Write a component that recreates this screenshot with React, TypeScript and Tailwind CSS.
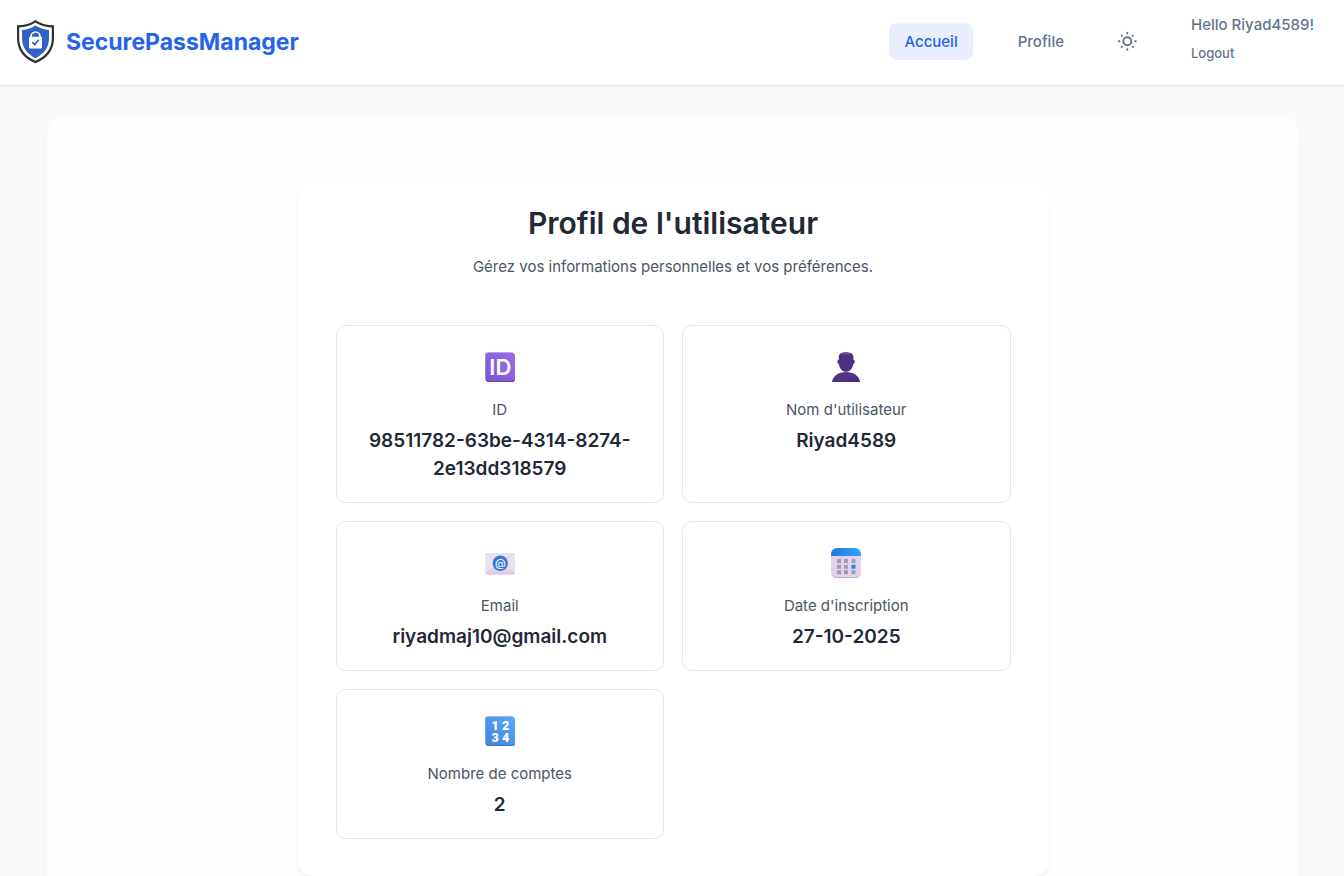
import type { ReactNode } from "react";

function ShieldLogo() {
  return (
    <svg viewBox="0 0 38 44" className="h-11 w-[38px]" aria-hidden="true">
      <path d="M19.500 0C15 3.500 8.500 5.300 1 5.300V18c0 12 6.300 20.500 18.500 25.300C31.700 38.500 38 30 38 18V5.300C30.500 5.300 24 3.500 19.500 0Z" fill="#2f3136" />
      <path d="M19.500 2.500C15 5.500 9.500 7.100 3.200 7.400V18c0 10.500 5.300 18 16.300 22.800C30.500 36 35.800 28.500 35.800 18V7.400C29.500 7.100 24 5.500 19.500 2.500Z" fill="#fff" />
      <path d="M19.500 5.500C15.500 8.300 11.500 9.500 6 10v8c0 9 4.500 15.600 13.500 20.200C28.500 33.600 33 27 33 18v-8C27.500 9.500 23.500 8.300 19.500 5.500Z" fill="#2f62c4" />
      <path d="M15 18v-1.500a4.500 4.500 0 0 1 9 0V18" fill="none" stroke="#fff" strokeWidth="1.700" />
      <rect x="13" y="16.800" width="13" height="11.700" rx=".8" fill="#fff" />
      <path d="m16.300 22.200 2.400 2.500 4-5" fill="none" stroke="#2f62c4" strokeWidth="1.700" />
    </svg>
  );
}

function SunIcon() {
  return (
    <svg viewBox="0 0 20 20" className="size-5" fill="none" stroke="currentColor" strokeWidth="1.900" strokeLinecap="round" aria-hidden="true">
      <circle cx="10.300" cy="10.300" r="4" />
      <path d="M10.300 1.800v.7M10.300 18.100v.7M1.800 10.300h.7M18.100 10.300h.7M4.600 4.600l.3.3M15.700 15.700l.3.3M4.600 16l.3-.3M15.700 4.900l.3-.3" />
    </svg>
  );
}

function IdIcon() {
  return (
    <svg viewBox="0 0 30 30" className="size-[30px]" aria-hidden="true">
      <defs>
        <linearGradient id="id-fill" x1="0" y1="1" x2="1" y2="0">
          <stop offset="0" stopColor="#7a55cf" />
          <stop offset="1" stopColor="#9c6cf0" />
        </linearGradient>
      </defs>
      <rect width="29" height="29" rx="3" fill="#b3a6cf" />
      <rect x=".6" y="1" width="29.400" height="29" rx="3" fill="url(#id-fill)" />
      <path d="M1 27q.5 3 3 3h23q3 0 3-3-1 2-3 2H4q-2 0-3-2Z" fill="#6a3fb0" />
      <text x="15.300" y="23.300" textAnchor="middle" fontFamily="Inter, sans-serif" fontWeight="600" fontSize="22" fill="#fff">ID</text>
    </svg>
  );
}

function UserIcon() {
  return (
    <svg viewBox="0 0 30 30" className="size-[30px]" aria-hidden="true">
      <defs>
        <linearGradient id="user-fill" x1="0" y1="0" x2="1" y2="1">
          <stop offset="0" stopColor="#5a3c98" />
          <stop offset="1" stopColor="#4a2673" />
        </linearGradient>
        <linearGradient id="user-head" x1="0" y1="0" x2="0" y2="1">
          <stop offset="0" stopColor="#4a3078" />
          <stop offset="1" stopColor="#523388" />
        </linearGradient>
      </defs>
      <path d="M1 30c1-6 6-10 14-10s13 4 14 10Z" fill="url(#user-fill)" />
      <path d="M7.800 4.500C8.300 1.300 11 .3 15 .3s6.900 1 7.400 4.200V7.800c1.900.2 1.900 4.200-.2 4.200-.6 4.600-3.200 7.800-7.100 7.800S8.400 16.600 7.900 12c-2.100 0-2.100-4 -.1-4.200Z" fill="url(#user-head)" />
      <path d="M11 1.500q4-1.400 8 0 1 1-1 1-4-.8-7 .2-1-.5 0-1.200Z" fill="#6a4d9c" />
    </svg>
  );
}

function MailIcon() {
  return (
    <svg viewBox="0 0 30 30" className="size-[30px]" aria-hidden="true">
      <defs>
        <linearGradient id="mail-fill" x1="0" y1="0" x2="0" y2="1">
          <stop offset="0" stopColor="#e9e2e8" />
          <stop offset="1" stopColor="#dfcdeb" />
        </linearGradient>
      </defs>
      <rect x=".5" y="5" width="29.500" height="21" rx="1" fill="url(#mail-fill)" />
      <path d="M.5 5.500 15 16 30 5.500V25L15 16 .5 25Z" fill="#f0e5f1" opacity=".7" />
      <path d="m.8 5.500 10 7.500m18.700-7.500L19 13M.8 25.500 11 17.500m18.500 8L19 17.500" stroke="#dccbe0" strokeWidth=".6" />
      <path d="M1 26h28.500" stroke="#d1a9cf" strokeWidth=".7" />
      <circle cx="15.300" cy="15.300" r="7.700" fill="#3579d2" />
      <text x="15.300" y="18.900" textAnchor="middle" fontFamily="Inter, sans-serif" fontWeight="500" fontSize="11" fill="#e9f2ff">@</text>
    </svg>
  );
}

function CalendarIcon() {
  return (
    <svg viewBox="0 0 30 30" className="size-[30px]" aria-hidden="true">
      <defs>
        <linearGradient id="cal-top" x1="0" y1="0" x2="1" y2="0">
          <stop offset="0" stopColor="#2476db" />
          <stop offset="1" stopColor="#30a4ff" />
        </linearGradient>
      </defs>
      <path d="M0 7h30v17.500a5.500 5.500 0 0 1-5.500 5.500h-19A5.500 5.500 0 0 1 0 24.500Z" fill="#e0d3ed" />
      <path d="M1 26.500Q2.500 30 5.500 30h19q3 0 4.500-3.500-2 2.500-4.500 2.500h-19Q3 29 1 26.500Z" fill="#c9a9cf" />
      <path d="M0 8V6a6 6 0 0 1 6-6h18a6 6 0 0 1 6 6v2Z" fill="url(#cal-top)" />
      <path d="M6 11h4v4H6zM13 11h4v4h-4zM20.500 11h4v4h-4zM6 16.700h4v4H6zM13 16.700h4v4h-4zM6 22.300h4v4H6zM13 22.300h4v4h-4zM20.500 22.300h4v4h-4z" fill="#a69aaf" />
      <path d="M20.500 16.700h4v4h-4z" fill="#1989ee" />
    </svg>
  );
}

function NumbersIcon() {
  return (
    <svg viewBox="0 0 30 30" className="size-[30px]" aria-hidden="true">
      <defs>
        <linearGradient id="num-fill" x1="0" y1="1" x2="1" y2="0">
          <stop offset="0" stopColor="#427fd8" />
          <stop offset="1" stopColor="#56adfc" />
        </linearGradient>
      </defs>
      <rect width="29" height="29" rx="3" fill="#9eb5cb" />
      <rect x=".6" y="1" width="29.400" height="29" rx="3" fill="url(#num-fill)" />
      <path d="M1 27q.5 3 3 3h23q3 0 3-3-1 2-3 2H4q-2 0-3-2Z" fill="#3c70cc" />
      <g fontFamily="Roboto, sans-serif" fontWeight="900" fontSize="12.500" fill="#fff" textAnchor="middle">
        <text x="10" y="13.500">1</text>
        <text x="20.500" y="13.500">2</text>
        <text x="10" y="25.500">3</text>
        <text x="20.500" y="25.500">4</text>
      </g>
    </svg>
  );
}

interface Detail {
  icon: ReactNode;
  label: string;
  value: string;
}

const details: Detail[] = [
  { icon: <IdIcon />, label: "ID", value: "98511782-63be-4314-8274-2e13dd318579" },
  { icon: <UserIcon />, label: "Nom d'utilisateur", value: "Riyad4589" },
  { icon: <MailIcon />, label: "Email", value: "riyadmaj10@gmail.com" },
  { icon: <CalendarIcon />, label: "Date d'inscription", value: "27-10-2025" },
  { icon: <NumbersIcon />, label: "Nombre de comptes", value: "2" },
];

function DetailCard({ icon, label, value }: Detail) {
  return (
    <div className="flex flex-col items-center rounded-[10px] border border-slate-200 bg-white px-6 pt-[26px] pb-[19px] text-center">
      {icon}
      <dt className="mt-[17px] text-[15px] leading-[22px] text-[#4b5563]">{label}</dt>
      <dd className="mt-[6px] max-w-full text-[19px] leading-7 font-semibold text-[#1f2937]">{value}</dd>
    </div>
  );
}

export default function App() {
  return (
    <div className="min-h-screen bg-[#f8fafc] font-['Inter',sans-serif]">
      <header className="flex items-center justify-between border-b border-slate-200 bg-white pr-[30px] pl-4 shadow-xs">
        <a href="#" className="flex items-center gap-3 pt-5 pb-[21px]">
          <ShieldLogo />
          <span className="text-[23px] leading-8 font-bold text-[#2563eb]">SecurePassManager</span>
        </a>
        <nav className="flex items-center pb-[3px] text-[15px] font-medium text-[#64748b]">
          <a href="#" className="rounded-lg bg-[#e9effd] px-[15px] py-2 leading-[21px] text-[#2563eb]">Accueil</a>
          <a href="#" className="ml-[30px] px-[15px] py-2 leading-[21px]">Profile</a>
          <button type="button" aria-label="Changer de thème" className="ml-[30px] p-2">
            <SunIcon />
          </button>
          <div className="ml-[46px] flex flex-col items-start gap-1 pb-1">
            <span className="leading-6">Hello Riyad4589!</span>
            <button type="button" className="text-[13px] leading-6 font-medium">Logout</button>
          </div>
        </nav>
      </header>
      <main className="pt-[29px] pr-[45px] pb-8 pl-[47px]">
        <div className="rounded-[19px] bg-[#fefefe] px-8 pt-[68px] pb-[68px] shadow-md shadow-black/5">
          <section className="mx-auto max-w-[751px] rounded-[15px] bg-white px-[38px] pt-5 pb-[37px] shadow-md shadow-black/5">
            <h1 className="text-center text-[30px] leading-10 font-semibold text-[#1f2937]">Profil de l'utilisateur</h1>
            <p className="mt-3 text-center text-[15px] leading-6 text-[#4b5563]">
              Gérez vos informations personnelles et vos préférences.
            </p>
            <dl className="mt-[46px] grid grid-cols-1 gap-[18px] sm:grid-cols-2">
              {details.map((detail) => (
                <DetailCard key={detail.label} {...detail} />
              ))}
            </dl>
          </section>
        </div>
      </main>
    </div>
  );
}
